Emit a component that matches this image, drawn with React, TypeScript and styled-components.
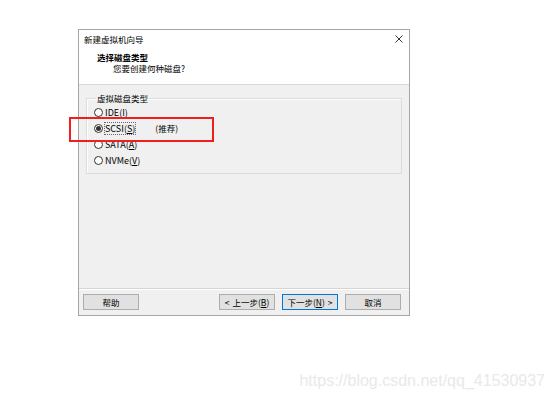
import React from "react";
import styled, { createGlobalStyle } from "styled-components";

const Global = createGlobalStyle`
  html, body { margin: 0; padding: 0; background: #ffffff; }
  body { font-family: "Noto Sans CJK SC", "Liberation Sans", sans-serif; }
`;

const Page = styled.div`
  width: 554px;
  height: 399px;
  box-sizing: border-box;
  padding: 29px 0 0 78px;
  display: flex;
  flex-direction: column;
  background: #ffffff;
  overflow: hidden;
`;

const Dialog = styled.div`
  position: relative;
  width: 332px;
  height: 287px;
  box-sizing: border-box;
  border: 1px solid #a6a6a6;
  display: flex;
  flex-direction: column;
  background: #f0f0f0;
  font-size: 8.5px;
  color: #000;
`;

const TitleBar = styled.div`
  height: 18px;
  background: #fff;
  display: flex;
  align-items: center;
  justify-content: space-between;
  padding: 0 6px 0 5px;
  line-height: 11px;
`;

const CloseIcon = styled.svg`
  width: 8px;
  height: 8px;
  display: block;
`;

const Header = styled.div`
  height: 37px;
  box-sizing: border-box;
  background: #fff;
  padding: 4px 0 0 18px;
  border-bottom: 1px solid #d9d9d9;
  display: flex;
  flex-direction: column;
`;

const HeaderTitle = styled.div`
  font-weight: 700;
  line-height: 11px;
`;

const HeaderSub = styled.div`
  line-height: 11px;
  padding-left: 16px;
`;

const Body = styled.div`
  flex: 1;
  padding: 7px 7px 0 7px;
  border-bottom: 1px solid #d5d5d5;
`;

const Group = styled.fieldset`
  margin: 0;
  padding: 0 0 5px 7px;
  border: 1px solid #dcdcdc;
  box-shadow: inset 1px 1px 0 #fff;
`;

const Legend = styled.legend`
  padding: 0 1px;
  margin-left: 2px;
  line-height: 12px;
`;

const Row = styled.label`
  height: 16px;
  display: flex;
  align-items: center;
  gap: 2px;
`;

const Radio = styled.span<{ $checked?: boolean }>`
  width: 9px;
  height: 9px;
  box-sizing: border-box;
  border: 1px solid #333;
  border-radius: 50%;
  background: #fff;
  display: flex;
  align-items: center;
  justify-content: center;
  &::after {
    content: "";
    width: 5px;
    height: 5px;
    border-radius: 50%;
    background: ${(p) => (p.$checked ? "#333" : "transparent")};
  }
`;

const Label = styled.span<{ $focused?: boolean }>`
  font-size: 9px;
  line-height: 11px;
  outline: ${(p) => (p.$focused ? "1px dotted #666" : "none")};
  outline-offset: 0;
`;

const Hint = styled.span`
  margin-left: 18px;
`;

const Footer = styled.div`
  display: flex;
  align-items: center;
  padding: 4px 8px 5px 4px;
  border-top: 1px solid #fff;
`;

const Spacer = styled.div`
  flex: 1;
`;

const Button = styled.button<{ $primary?: boolean; $gap?: number }>`
  width: 56px;
  height: 16px;
  margin-left: ${(p) => p.$gap ?? 0}px;
  box-sizing: border-box;
  border: 1px solid ${(p) => (p.$primary ? "#0078d7" : "#adadad")};
  background: #e1e1e1;
  font-family: "Noto Sans CJK SC", "Liberation Sans", sans-serif;
  font-size: 8.5px;
  line-height: 10px;
  padding: 0;
  color: #000;
  display: flex;
  align-items: center;
  justify-content: center;
  gap: 3px;
`;

const Highlight = styled.div`
  position: absolute;
  left: -10px;
  top: 87px;
  width: 145px;
  height: 25px;
  box-sizing: border-box;
  border: 2px solid #f21e1e;
  pointer-events: none;
`;

const Watermark = styled.div`
  align-self: flex-end;
  margin: 56px 9px 0 0;
  font-family: "Liberation Sans", Arial, sans-serif;
  font-size: 16px;
  line-height: 18px;
  color: #e9e9e9;
`;

const U = styled.u`
  text-decoration: underline;
  text-underline-offset: 1px;
`;

const options = [
  { name: "IDE", key: "I" },
  { name: "SCSI", key: "S", checked: true, hint: "(推荐)" },
  { name: "SATA", key: "A" },
  { name: "NVMe", key: "V" },
];

export default function App() {
  return (
    <>
      <Global />
      <Page>
        <Dialog>
          <TitleBar>
            <span>新建虚拟机向导</span>
            <CloseIcon viewBox="0 0 8 8">
              <path d="M0.5 0.5 L7.5 7.5 M7.5 0.5 L0.5 7.5" stroke="#333" strokeWidth="1" />
            </CloseIcon>
          </TitleBar>
          <Header>
            <HeaderTitle>选择磁盘类型</HeaderTitle>
            <HeaderSub>您要创建何种磁盘?</HeaderSub>
          </Header>
          <Body>
            <Group>
              <Legend>虚拟磁盘类型</Legend>
              {options.map((o) => (
                <Row key={o.name}>
                  <Radio $checked={o.checked} />
                  <Label $focused={o.checked}>
                    {o.name}(<U>{o.key}</U>)
                  </Label>
                  {o.hint && <Hint>{o.hint}</Hint>}
                </Row>
              ))}
            </Group>
          </Body>
          <Footer>
            <Button>帮助</Button>
            <Spacer />
            <Button>
              <span>&lt;</span>
              <span>
                上一步(<U>B</U>)
              </span>
            </Button>
            <Button $primary $gap={7}>
              <span>
                下一步(<U>N</U>)
              </span>
              <span>&gt;</span>
            </Button>
            <Button $gap={7}>取消</Button>
          </Footer>
          <Highlight />
        </Dialog>
        <Watermark>https://blog.csdn.net/qq_41530937</Watermark>
      </Page>
    </>
  );
}
